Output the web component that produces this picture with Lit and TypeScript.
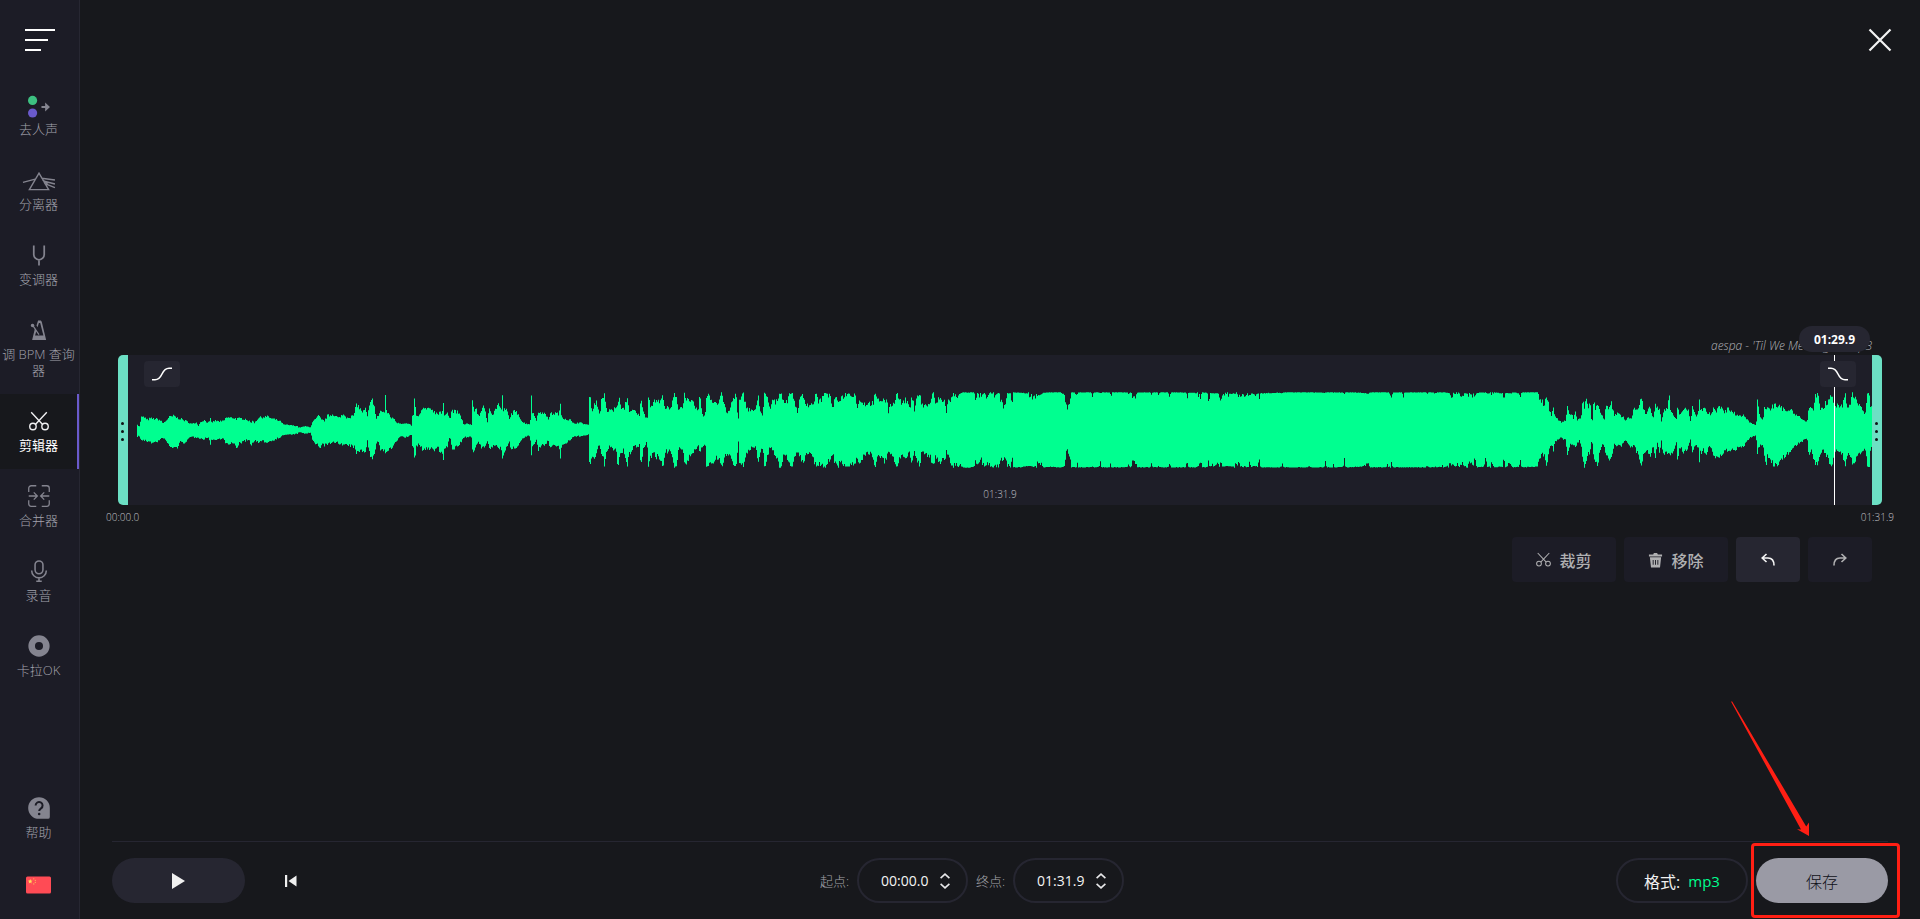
import { LitElement, html, css, svg } from "lit";
import { customElement, property } from "lit/decorators.js";
import { classMap } from "lit/directives/class-map.js";
import { styleMap } from "lit/directives/style-map.js";

/* ---------- waveform data ---------- */

/** A traced stretch of the envelope: x, top and bottom, three units per column. */
interface Stretch {
  start: number;
  axis: number;
  points: string;
}

const WAVE_COLUMNS = 1735;
const WAVE_HEIGHT = 76;

const STRETCHES: Stretch[] = [
  {
    start: -37,
    axis: 270,
    points: `111,250,290 118,262,288 124,232,300 135,232,302 140,240,304 150,236,303 158,236,310 170,237,305 180,240,300
    190,250,293 200,240,305 208,232,318 222,228,324 232,234,322 240,235,306 250,240,310 262,245,300 275,252,290 285,250,292
    290,244,292 294,260,290 300,248,295 312,240,298 320,246,292 328,248,296 331,236,312 335,248,298 345,242,300 355,244,298
    365,245,295 375,240,300 378,232,312 390,234,314 400,233,308 410,237,322 420,236,308 430,236,306 440,238,300 448,244,300
    454,250,318 457,238,312 462,250,300 475,234,308 490,231,304 505,230,306 515,236,302 530,240,296 545,246,290 550,254,285
    575,256,283 592,258,282 597,263,276 615,259,281 632,261,278 638,246,300 645,240,315 650,235,310 655,228,318 660,232,326
    664,240,312 675,242,316 682,228,312 690,226,312 700,222,308 712,232,305 722,234,312 727,222,314 740,232,316 755,230,318
    763,225,320 770,190,345 775,198,330 782,210,332 790,216,330 796,206,334 803,232,300 806,210,330 812,190,350 818,180,352
    824,195,350 828,240,310 834,228,300 842,212,330 850,218,330 854,215,332 856,158,340 859,215,335 866,220,330 875,235,325
    883,235,315 890,248,305 898,248,290 910,252,290 918,250,292 935,256,285 938,225,320 941,228,322 943,165,350 946,200,360
    949,230,315 960,225,315 965,212,325 975,205,330 985,210,325 995,205,325 1005,218,330 1015,220,320 1020,212,340
    1027,225,330 1030,180,360 1033,232,325 1042,210,320 1050,240,290 1056,210,325 1065,215,325 1075,218,318 1085,235,305
    1092,255,292 1105,250,290 1115,255,290 1118,165,335 1121,210,345 1130,212,312 1138,230,308 1145,205,325 1150,200,325
    1157,220,315 1162,250,300 1168,198,330 1178,225,320 1186,210,312 1195,190,325 1204,215,320 1207,162,350 1210,210,340
    1222,212,320 1228,240,300 1232,225,328 1242,215,325 1255,220,315 1266,245,300 1275,250,290 1291,252,288 1294,165,350
    1297,215,320 1305,230,312 1310,240,300 1316,210,330 1325,225,315 1335,215,320 1345,240,300 1350,222,320 1365,220,315
    1378,222,320 1381,190,355 1385,230,315 1400,238,310 1412,240,298 1418,250,292 1440,248,288 1465,255,285`,
  },
  {
    start: 443,
    axis: 270,
    points: `26,256,284 28,160,360 31,178,380 36,205,352 40,212,350 44,185,350 50,188,340 56,212,320 60,222,312 64,185,350
    70,178,355 74,158,380 78,195,340 84,222,322 92,205,322 100,215,330 108,195,330 114,205,380 118,160,350 122,205,345
    132,210,330 142,170,378 147,210,345 155,215,330 165,212,312 172,225,325 179,225,312 183,160,380 187,205,350 192,222,320
    200,232,308 203,228,330 206,160,380 210,195,350 222,188,340 230,178,350 238,188,350 244,180,365 250,168,380 256,205,335
    265,205,335 270,212,325 278,188,350 284,160,380 290,170,378 296,210,325 305,200,335 310,195,330 314,160,378 320,175,365
    328,190,350 338,188,345 348,205,325 356,212,315 360,160,340 364,200,325 370,228,320 376,230,310 379,170,380 385,160,375
    395,180,365 405,185,362 414,195,350 422,165,372 428,165,380 435,205,350 443,222,335 450,208,350 456,185,355 462,172,370
    469,160,380 473,230,325 476,238,300 478,185,375 484,178,370 490,160,378 496,190,350 505,208,335 515,210,325 528,212,322
    535,165,362 540,205,335 549,232,325 553,158,380 558,170,370 564,180,345 570,210,318 578,180,330 588,190,345 598,162,375
    605,160,380 612,188,345 622,182,350 632,160,380 638,160,378 645,190,345 652,215,335 660,180,350 668,165,370 676,185,350
    684,195,335 694,195,345 702,185,360 709,162,380 716,185,370 726,178,370 732,160,380 742,160,375 752,175,350 758,205,340
    766,178,370 775,182,375 785,172,365 795,165,380 805,160,380 815,165,372 825,160,378 832,200,350 842,178,375 850,190,345
    860,192,340 870,190,340 880,190,350 886,160,380 892,182,350 904,180,355 915,180,365 922,190,345 925,220,335 928,195,340
    940,195,350 950,160,382 956,172,365 965,192,340 975,180,350 986,190,340 990,218,335 996,165,375 1004,210,330
    1010,168,365 1020,162,375 1025,195,335 1040,198,345 1050,190,345 1060,160,378 1068,195,345 1080,170,370 1088,190,350
    1095,180,370 1099,218,325 1104,185,345 1112,180,365 1120,165,378 1130,170,372 1140,160,376 1150,157,382 1165,158,383
    1183,157,380 1187,188,358 1191,158,375 1205,170,360 1212,158,382 1222,172,372 1235,160,378 1245,165,375 1255,158,375
    1262,180,358 1270,198,355 1277,200,350 1280,160,372 1292,160,378 1297,190,355 1300,157,382 1320,158,382 1340,160,378
    1362,172,380 1380,165,368 1390,158,382 1410,157,380 1430,157,382 1438,157,382`,
  },
  {
    start: 923,
    axis: 270,
    points: `0,157,382 12,162,380 18,190,350 22,207,322 27,195,360 31,190,345 34,157,382 45,158,380 51,172,372 55,157,382
    92,157,382 97,163,380 103,157,382 118,157,380 121,165,370 125,157,382 149,157,382 153,176,368 157,157,382 202,157,382
    206,162,375 210,157,382 214,158,380 218,170,368 226,168,370 232,158,382 271,157,382 275,174,376 279,157,382 293,157,382
    296,164,378 300,157,382 325,157,382 329,176,370 333,157,382 378,158,382 382,170,364 386,157,382 410,160,382 422,170,366
    426,157,382 442,158,382 446,182,364 450,160,380 470,160,374 478,162,376 482,180,374 486,162,380 505,164,378 520,160,380
    535,164,370 540,162,380 550,164,376 556,170,380 562,160,382 570,168,366 574,160,380 590,164,378 594,160,382 598,170,360
    602,160,382 660,158,382 668,160,376 672,157,382 742,157,382 747,157,378 752,157,382 793,158,382 797,166,360 800,157,382
    818,157,382 822,158,370 826,157,382 850,158,380 853,170,358 857,157,382 905,158,380 925,162,374 930,157,382 979,157,382
    982,157,368 986,157,382 995,170,374 999,157,382 1026,157,382 1030,166,382 1034,157,382 1098,157,382 1102,162,374
    1106,157,382 1122,158,382 1126,166,380 1130,157,382 1146,157,380 1150,157,374 1154,157,382 1168,160,376 1176,170,374
    1180,165,366 1184,160,380 1192,166,378 1200,160,378 1206,170,364 1210,178,366 1214,158,380 1228,164,372 1234,172,370
    1240,160,378 1246,175,354 1250,158,382 1273,158,380 1278,166,354 1282,160,382 1298,165,374 1302,157,382 1328,160,380
    1332,176,356 1336,160,382 1355,160,374 1360,157,382 1377,160,380 1381,172,356 1385,157,382 1434,157,380 1438,170,362
    1442,186,350 1446,180,346 1452,196,340 1455,190,338 1458,160,374 1462,178,362 1466,186,345 1469,215,325 1476,228,312
    1480,192,338 1485,230,302 1495,238,298 1500,242,294`,
  },
  {
    start: 1363,
    axis: 330,
    points: `182,305,352 186,306,352 190,304,358 198,300,362 202,255,402 206,275,390 210,290,370 216,285,378 220,295,372
    226,278,385 232,298,372 238,298,362 244,288,375 248,240,425 253,262,438 260,235,415 265,262,390 270,240,400 274,300,362
    278,300,370 281,240,420 287,268,428 293,250,430 300,272,400 308,290,370 314,295,378 318,260,400 324,262,412 330,262,428
    334,232,420 338,270,400 344,285,372 352,280,378 362,285,380 370,292,370 378,305,356 384,292,375 395,298,380 402,260,378
    410,270,395 418,262,410 424,226,438 430,268,408 440,285,390 447,258,408 452,268,402 460,295,375 466,255,412 472,262,370
    480,275,400 485,308,360 490,275,408 498,265,400 504,262,408 508,224,408 512,270,412 522,285,385 530,300,370 533,262,438
    537,275,395 543,290,378 547,268,402 556,268,392 565,268,380 572,308,355 577,262,400 585,285,375 595,285,380 598,232,424
    601,270,400 610,268,390 618,270,408 626,280,385 633,285,380 640,262,405 650,272,408 658,262,412 665,258,405 672,280,395
    681,270,390 684,245,398 688,270,390 700,278,388 712,285,385 722,288,380 735,286,375 742,300,365 752,308,352 769,315,348
    772,240,415 776,270,385 785,300,372 790,300,375 794,260,420 798,262,438 803,265,405 810,272,408 815,260,425 822,258,438
    830,258,434 840,262,425 850,268,410 860,275,400 870,265,395 880,275,385 890,285,375 900,292,370 912,304,360 922,305,352
    926,262,410 935,268,390 942,268,415 947,222,430 952,225,438 957,230,420 962,268,400 970,270,385 976,248,400 982,258,408
    988,240,430 994,220,440 1000,250,420 1008,262,385 1014,250,400 1022,258,398 1028,262,395 1033,235,430 1037,218,440
    1041,262,400 1050,260,400 1058,220,438 1063,235,425 1072,240,405 1080,258,398 1090,275,392 1096,282,385 1102,220,440
    1108,230,440 1112,262,385 1117,268,385`,
  },
];

/** Turns the traced stretches into one closed, stepped outline. */
function buildWavePath(): string {
  const knots: [number, number, number][] = [];
  for (const { start, axis, points } of STRETCHES) {
    for (const triple of points.trim().split(/\s+/)) {
      const [x, top, bottom] = triple.split(",").map(Number);
      knots.push([start + x / 3, (axis - top) / 3, (bottom - axis) / 3]);
    }
  }
  let seed = 7;
  const noise = () => {
    seed = (seed * 16807) % 2147483647;
    return seed / 2147483647 - 0.5;
  };
  const mid = WAVE_HEIGHT / 2;
  let upper = `M0 ${mid}`;
  const lower: string[] = [];
  let k = 0;
  for (let x = 0; x < WAVE_COLUMNS; x++) {
    while (k < knots.length - 2 && knots[k + 1][0] <= x + 0.5) k++;
    const [x0, u0, d0] = knots[k];
    const [x1, u1, d1] = knots[k + 1];
    const t = Math.min(1, Math.max(0, (x + 0.5 - x0) / (x1 - x0 || 1)));
    // Loud stretches are clipped flat, quiet ones flutter a little.
    const ripple = (level: number) => {
      const spread = level > 36 ? 0.6 : Math.min(6, level * 0.22);
      return Math.min(37.7, Math.max(1, level + noise() * spread));
    };
    const up = ripple(u0 + (u1 - u0) * t);
    const down = ripple(d0 + (d1 - d0) * t);
    upper += `V${(mid - up).toFixed(1)}H${x + 1}`;
    lower.push(`V${(mid + down).toFixed(1)}H${x}`);
  }
  return upper + lower.reverse().join("") + "Z";
}

const WAVE_PATH = buildWavePath();

/* ---------- icons ---------- */

const scissors = svg`
  <g fill="none" stroke="currentColor" stroke-width="1.5">
    <path d="M3.500 2.500 15.700 15.600M20.500 2.500 8.300 15.600" />
    <circle cx="5.400" cy="18" r="3.500" /><circle cx="18.600" cy="18" r="3.500" />
  </g>`;

const ICONS = {
  vocal: svg`
    <circle cx="5" cy="7" r="5" fill="#3dc081" /><circle cx="5" cy="20.700" r="5" fill="#6a5acb" />
    <path d="M14.700 13.200h4V9.200l5.300 5-5.300 5v-4h-4z" fill="currentColor" />`,
  splitter: svg`
    <g fill="none" stroke="currentColor" stroke-width="1.500">
      <path d="M12 4.500 22.500 22.500H1.500zM-5.500 14.500 7.800 11M14.900 10.100 29.400 12M16.700 13.100l12.700 3.300M17.800 15.600l11.600 4.800M15.500 11.500l6 4.500" />
    </g>`,
  pitch: svg`
    <g fill="none" stroke="currentColor" stroke-width="1.900"><path d="M6.300 1.500v10a5.700 5.700 0 0 0 11.400 0v-10M12 17v6.500" /></g>`,
  metronome: svg`
    <path d="M11 1.500h3l1 1.500 4.800 20H4.500l3-12.500 1.700 2.300L7.700 18h9.100L13.300 4.300h-1.400L10.400 9 9.300 7z" fill="currentColor" />
    <path d="M4.200 5.500 12 17" stroke="currentColor" stroke-width="1.300" /><circle cx="5" cy="7" r="1.900" fill="currentColor" />`,
  cutter: scissors,
  joiner: svg`
    <g fill="none" stroke="currentColor" stroke-width="1.400">
      <path d="M9 .8H3.500A2.700 2.700 0 0 0 .8 3.500v4M15 .8h5.500a2.700 2.700 0 0 1 2.700 2.700v4M9 23.200H3.500A2.700 2.700 0 0 1 .8 20.500v-4M15 23.200h5.500a2.700 2.700 0 0 0 2.700-2.700v-4" />
      <path d="M.8 12h9M6.300 8l3.900 4-3.900 4M23.200 12h-9M17.700 8l-3.900 4 3.900 4" />
    </g>`,
  mic: svg`
    <g fill="none" stroke="currentColor" stroke-width="1.700">
      <rect x="7.700" y="1" width="8.600" height="14" rx="4.300" />
      <path d="M4 11.500a8 8 0 0 0 16 0M12 19.500V23M9 23.200h6" />
    </g>`,
  disc: svg`<circle cx="12" cy="12" r="8" fill="none" stroke="currentColor" stroke-width="7.200" />`,
  help: svg`
    <path d="M12 .2A11.800 11.800 0 1 0 12 23.800h9.800a2 2 0 0 0 2-2V12A11.800 11.800 0 0 0 12 .2z" fill="currentColor" />
    <path d="M8.300 9.300a3.800 3.800 0 1 1 5.900 3.100c-1.300.9-2 1.400-2 3" fill="none" stroke="#1c1c26" stroke-width="2.200" />
    <circle cx="12.200" cy="18.500" r="1.400" fill="#1c1c26" />`,
};

type IconName = keyof typeof ICONS;

const NAV: { icon: IconName; label: string; active?: boolean }[] = [
  { icon: "vocal", label: "去人声" },
  { icon: "splitter", label: "分离器" },
  { icon: "pitch", label: "变调器" },
  { icon: "metronome", label: "调 BPM 查询器" },
  { icon: "cutter", label: "剪辑器", active: true },
  { icon: "joiner", label: "合并器" },
  { icon: "mic", label: "录音" },
  { icon: "disc", label: "卡拉OK" },
];

const FONT = css`"Open Sans", "Noto Sans CJK SC", sans-serif`;

/* ---------- sidebar ---------- */

@customElement("side-nav")
export class SideNav extends LitElement {
  static styles = css`
    :host {
      display: flex;
      flex-direction: column;
      box-sizing: border-box;
      width: 80px;
      flex: none;
      background: #1c1c26;
      border-right: 1px solid #272732;
      font-family: ${FONT};
    }
    .menu {
      display: flex;
      height: 78px;
      padding: 2px 0 0 25px;
      align-items: center;
      border: 0;
      background: none;
      color: #fff;
    }
    .list {
      display: flex;
      flex-direction: column;
    }
    .item {
      display: flex;
      flex-direction: column;
      align-items: center;
      gap: 4px;
      padding: 15px 2px 16px 0;
      color: #a2a2ac;
      font-size: 13px;
      font-weight: 300;
      line-height: 16px;
      text-align: center;
      text-decoration: none;
    }
    .item.active {
      background: #17181c;
      color: #fff;
      font-weight: 400;
      box-shadow: inset -2px 0 #6a5acb;
    }
    .icon {
      width: 24px;
      height: 24px;
      padding: 1px;
      box-sizing: border-box;
      overflow: visible;
      color: #84848f;
    }
    .active .icon {
      color: #f0f0f2;
    }
    .bottom {
      margin-top: auto;
      display: flex;
      flex-direction: column;
      padding-bottom: 5px;
    }
    .lang {
      display: flex;
      align-items: center;
      justify-content: center;
      height: 58px;
      padding: 0 2px 0 0;
      border: 0;
      background: none;
    }
  `;

  render() {
    return html`
      <button class="menu" aria-label="菜单">
        <svg width="30" height="22" viewBox="0 0 30 22" fill="currentColor">
          <path d="M0 0h30v2H0zM0 10h23v2H0zM0 20h16v2H0z" />
        </svg>
      </button>
      <nav class="list">${NAV.map((n) => this.item(n.icon, n.label, n.active))}</nav>
      <div class="bottom">
        ${this.item("help", "帮助")}
        <button class="lang" aria-label="语言">
          <svg width="25" height="18" viewBox="0 0 25 18">
            <rect width="25" height="17" y=".5" rx="1.500" fill="#ff4b55" />
            <path d="m4.200 3 .7 1.500 1.600.2-1.200 1.100.3 1.600-1.400-.8-1.400.8.3-1.600L1.900 4.700l1.600-.2z" fill="#ffe15a" />
            <g fill="#ffc15a"><circle cx="7.800" cy="2.800" r=".6" /><circle cx="9.300" cy="4.300" r=".6" /><circle cx="9.300" cy="6.300" r=".6" /><circle cx="7.800" cy="7.900" r=".6" /></g>
          </svg>
        </button>
      </div>
    `;
  }

  private item(icon: IconName, label: string, active = false) {
    return html`<a class=${classMap({ item: true, active })} href="#">
      <svg class="icon" viewBox="0 0 24 24" aria-hidden="true">${ICONS[icon]}</svg>
      <span>${label}</span>
    </a>`;
  }
}

/* ---------- time field ---------- */

@customElement("time-field")
export class TimeField extends LitElement {
  @property() label = "";
  @property() value = "";

  static styles = css`
    :host {
      display: flex;
      align-items: center;
      gap: 8px;
      font-family: ${FONT};
    }
    .label {
      color: #a4a4aa;
      font-size: 13px;
      font-weight: 300;
    }
    .pill {
      display: flex;
      align-items: center;
      box-sizing: border-box;
      height: 45px;
      width: 111px;
      padding: 0 16px 0 22px;
      gap: 8px;
      border: 2px solid #262631;
      border-radius: 23px;
    }
    .value {
      flex: 1;
      min-width: 0;
      padding: 0;
      border: 0;
      background: none;
      color: #f4f4f4;
      font: 14px ${FONT};
    }
    .steps {
      display: flex;
      flex-direction: column;
      gap: 4px;
    }
    .step {
      display: flex;
      padding: 0;
      border: 0;
      background: none;
      color: #e8e8ea;
    }
  `;

  render() {
    return html`
      <label class="label" for="time">${this.label}</label>
      <div class="pill">
        <input class="value" id="time" type="text" .value=${this.value} />
        <div class="steps">
          <button class="step" aria-label="增加">
            <svg width="10" height="6" viewBox="0 0 10 6" fill="none" stroke="currentColor" stroke-width="1.600"><path d="m.6 5.200 4.400-4 4.400 4" /></svg>
          </button>
          <button class="step" aria-label="减少">
            <svg width="10" height="6" viewBox="0 0 10 6" fill="none" stroke="currentColor" stroke-width="1.600"><path d="m.6.800 4.400 4 4.400-4" /></svg>
          </button>
        </div>
      </div>
    `;
  }
}

/* ---------- waveform editor ---------- */

@customElement("wave-editor")
export class WaveEditor extends LitElement {
  @property({ type: Number }) duration = 91.9;
  @property({ type: Number }) position = 89.9;

  static styles = css`
    :host {
      display: block;
      padding: 0 6px;
      font-family: ${FONT};
    }
    .name {
      height: 18px;
      margin-right: 10px;
      color: #b4b4ba;
      font-size: 12px;
      font-weight: 300;
      line-height: 18px;
      font-style: italic;
      text-align: right;
    }
    .track {
      display: flex;
      height: 150px;
    }
    .grip {
      display: flex;
      flex-direction: column;
      align-items: center;
      justify-content: center;
      gap: 5px;
      width: 10px;
      padding: 3px 1px 0 0;
      box-sizing: border-box;
      border: 0;
      background: #6ce0c4;
      border-radius: 5px 0 0 5px;
    }
    .grip.end {
      border-radius: 0 5px 5px 0;
    }
    .dot {
      width: 3px;
      height: 3px;
      border-radius: 50%;
      background: #101214;
    }
    .lane {
      position: relative;
      display: flex;
      flex: 1;
      align-items: center;
      padding-left: 9px;
      background: #1e1e28;
    }
    .wave {
      flex: 1;
      width: 100%;
      min-width: 0;
      height: 76px;
    }
    .fade {
      position: absolute;
      z-index: 2;
      top: 6px;
      display: flex;
      align-items: center;
      justify-content: center;
      width: 36px;
      height: 26px;
      padding: 0;
      border: 0;
      border-radius: 4px;
      background: #262631;
      color: #fff;
    }
    .fade.in {
      left: 16px;
    }
    .fade.out {
      right: 16px;
    }
    .length {
      position: absolute;
      bottom: 4px;
      left: 0;
      right: 0;
      text-align: center;
    }
    .length,
    .scale {
      color: #c0c0c6;
      font-size: 10px;
      font-weight: 300;
      line-height: 14px;
    }
    .playhead {
      position: absolute;
      z-index: 1;
      top: 0;
      bottom: 0;
      width: 1px;
      background: #fff;
    }
    .bubble {
      position: absolute;
      bottom: 153px;
      left: -35px;
      width: 71px;
      height: 26px;
      border-radius: 13px;
      background: #262631;
      color: #fff;
      font-size: 12px;
      font-weight: 700;
      line-height: 28px;
      text-align: center;
    }
    .scale {
      display: flex;
      justify-content: space-between;
      height: 27px;
      margin: 0 -12px;
      padding-top: 5px;
    }
    .tools {
      display: flex;
      justify-content: flex-end;
      gap: 8px;
      margin-right: 10px;
    }
    .tool {
      display: flex;
      align-items: center;
      justify-content: center;
      gap: 8px;
      width: 104px;
      height: 45px;
      padding: 0;
      border: 0;
      border-radius: 4px;
      background: #1c1c26;
      color: #b0b0b2;
      font: 500 16px ${FONT};
    }
    .tool.square {
      width: 64px;
    }
    .tool.on {
      background: #262631;
      color: #f4f4f4;
    }
  `;

  render() {
    const left = `${(this.position / this.duration) * 100}%`;
    return html`
      <div class="name">aespa - 'Til We Meet Again.mp3</div>
      <div class="track">
        ${this.grip("起点", false)}
        <div class="lane">
          <svg class="wave" viewBox="0 0 ${WAVE_COLUMNS} ${WAVE_HEIGHT}" preserveAspectRatio="none" aria-hidden="true">
            <path d=${WAVE_PATH} fill="#00ff90" />
          </svg>
          <button class="fade in" aria-label="淡入">
            <svg width="20" height="14" viewBox="0 0 20 14" fill="none" stroke="currentColor" stroke-width="1.600"><path d="M0 12.800h3C11.500 12.800 8.500 1.200 17 1.200h3" /></svg>
          </button>
          <button class="fade out" aria-label="淡出">
            <svg width="20" height="14" viewBox="0 0 20 14" fill="none" stroke="currentColor" stroke-width="1.600"><path d="M0 1.200h3C11.500 1.200 8.500 12.800 17 12.800h3" /></svg>
          </button>
          <div class="length">01:31.9</div>
          <div class="playhead" style=${styleMap({ left })}><div class="bubble">01:29.9</div></div>
        </div>
        ${this.grip("终点", true)}
      </div>
      <div class="scale"><span>00:00.0</span><span>01:31.9</span></div>
      <div class="tools">
        <button class="tool">
          <svg width="15" height="15" viewBox="1 1 22 22">${scissors}</svg>裁剪
        </button>
        <button class="tool">
          <svg width="15" height="16" viewBox="0 0 16 16" fill="currentColor">
            <path d="M1 2h4.500l.8-1.500h3.400l.8 1.500H15v2.200H1z" />
            <path fill-rule="evenodd" d="M2 5h12l-1.200 11H3.200zM5 8v5h1V8zM7.500 8v5h1V8zM10 8v5h1V8z" />
          </svg>移除
        </button>
        <button class="tool square on" aria-label="撤销">
          <svg width="14" height="14" viewBox="0 0 14 14" fill="none" stroke="currentColor" stroke-width="1.600"><path d="M5.500 1 1.200 5l4.300 4M1.500 5h5.500c4 0 6 2.800 6 7.500" /></svg>
        </button>
        <button class="tool square" aria-label="重做">
          <svg width="14" height="14" viewBox="0 0 14 14" fill="none" stroke="currentColor" stroke-width="1.600"><path d="M8.500 1l4.300 4-4.300 4M12.500 5H7c-4 0-6 2.800-6 7.500" /></svg>
        </button>
      </div>
    `;
  }

  private grip(label: string, end: boolean) {
    return html`<button class=${classMap({ grip: true, end })} aria-label=${label}>
      <span class="dot"></span><span class="dot"></span><span class="dot"></span>
    </button>`;
  }
}

/* ---------- application ---------- */

@customElement("app-root")
export class AppRoot extends LitElement {
  static styles = css`
    :host {
      display: flex;
      height: 100vh;
      min-height: 780px;
      overflow: hidden;
      background: #17181c;
      font-family: ${FONT};
    }
    .main {
      display: flex;
      flex: 1;
      flex-direction: column;
      min-width: 0;
      padding: 0 32px;
    }
    .top {
      display: flex;
      height: 78px;
      align-items: center;
      justify-content: flex-end;
    }
    .close {
      display: flex;
      padding: 2px 0 0;
      margin-right: -4px;
      border: 0;
      background: none;
      color: #f4f4f4;
    }
    .stage {
      display: flex;
      flex: 1;
      flex-direction: column;
      justify-content: center;
    }
    .bar {
      display: flex;
      align-items: flex-start;
      justify-content: space-between;
      box-sizing: border-box;
      height: 78px;
      padding-top: 16px;
      border-top: 1px solid #262631;
    }
    .group {
      display: flex;
      align-items: center;
      gap: 8px;
    }
    .play,
    .back,
    .format,
    .save {
      display: flex;
      align-items: center;
      justify-content: center;
      box-sizing: border-box;
      height: 45px;
      padding: 0;
      border: 0;
      border-radius: 23px;
      background: none;
      color: #f0f0f0;
      font: 16px ${FONT};
    }
    .play {
      width: 133px;
      background: #262631;
    }
    .back {
      width: 75px;
    }
    .format {
      width: 132px;
      gap: 8px;
      border: 2px solid #262631;
    }
    .type {
      color: #00ff90;
      font-size: 15px;
    }
    .final {
      position: relative;
    }
    .save {
      width: 132px;
      background: #9a9aa5;
      color: #101018;
      font-weight: 300;
    }
    .frame {
      position: absolute;
      inset: -15px -12px -15px -5px;
      box-sizing: border-box;
      border: 3px solid #ff1f14;
      border-radius: 4px;
      pointer-events: none;
    }
    .arrow {
      position: absolute;
      right: 78px;
      bottom: 67px;
      pointer-events: none;
    }
  `;

  render() {
    return html`
      <side-nav></side-nav>
      <main class="main">
        <div class="top">
          <button class="close" aria-label="关闭">
            <svg width="24" height="24" viewBox="0 0 24 24" fill="none" stroke="currentColor" stroke-width="2.200"><path d="m1.500 1.500 21 21M22.500 1.500l-21 21" /></svg>
          </button>
        </div>
        <div class="stage"><wave-editor></wave-editor></div>
        <footer class="bar">
          <div class="group">
            <button class="play" aria-label="播放">
              <svg width="14" height="16" viewBox="0 0 14 16" fill="currentColor"><path d="M0 0v16l13-8z" /></svg>
            </button>
            <button class="back" aria-label="回到开头">
              <svg width="12" height="12" viewBox="0 0 12 12" fill="currentColor"><path d="M0 0h2.200v12H0zM11.500.5v11L3.500 6z" /></svg>
            </button>
          </div>
          <div class="group">
            <time-field label="起点:" value="00:00.0"></time-field>
            <time-field label="终点:" value="01:31.9"></time-field>
          </div>
          <div class="group">
            <button class="format">格式: <span class="type">mp3</span></button>
            <div class="final">
              <button class="save">保存</button>
              <div class="frame"></div>
              <svg class="arrow" width="80" height="136" viewBox="0 0 80 136" aria-hidden="true">
                <path d="M1 1.500 71 129.500l-4-.2L79 136v-13.500L76.200 126.500 2.200 1.500z" fill="#ff1f14" />
              </svg>
            </div>
          </div>
        </footer>
      </main>
    `;
  }
}
